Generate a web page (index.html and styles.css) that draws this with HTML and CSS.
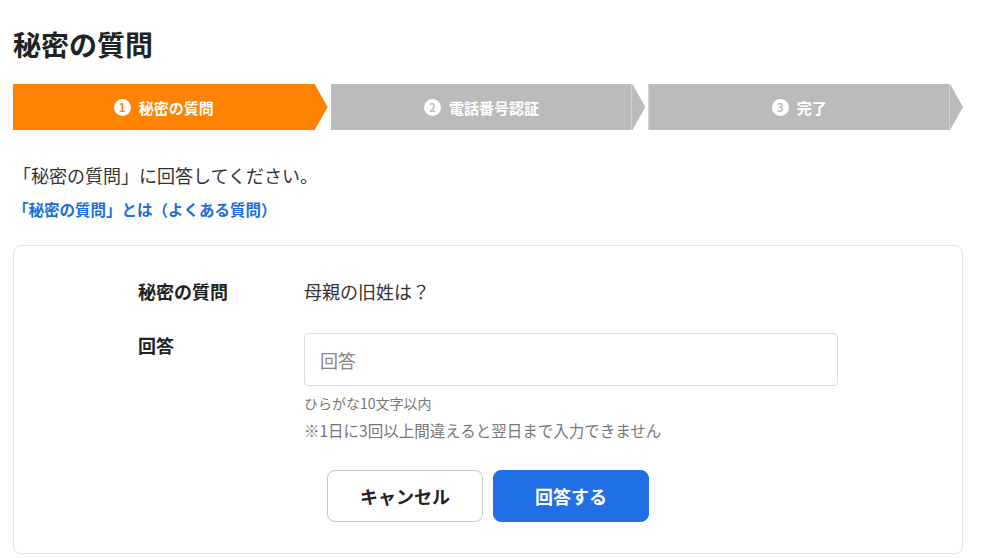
FILE: index.html
```html
<!DOCTYPE html>
<html lang="ja">
<head>
<meta charset="utf-8">
<title>秘密の質問</title>
<link rel="stylesheet" href="styles.css">
</head>
<body>
<div class="page">
  <h1 class="title">秘密の質問</h1>
  <ol class="steps">
    <li class="step step-active"><span class="num">1</span><span class="label">秘密の質問</span></li>
    <li class="step"><span class="num">2</span><span class="label">電話番号認証</span></li>
    <li class="step"><span class="num">3</span><span class="label">完了</span></li>
  </ol>
  <p class="lead">「秘密の質問」に回答してください。</p>
  <a class="faq" href="#">「秘密の質問」とは（よくある質問）</a>
  <div class="card">
    <div class="row">
      <div class="row-label">秘密の質問</div>
      <div class="row-value">母親の旧姓は？</div>
    </div>
    <div class="row row-answer">
      <div class="row-label">回答</div>
      <div class="row-field">
        <input class="input" type="text" placeholder="回答">
        <p class="hint">ひらがな10文字以内</p>
        <p class="note">※1日に3回以上間違えると翌日まで入力できません</p>
      </div>
    </div>
    <div class="actions">
      <button class="btn btn-cancel" type="button">キャンセル</button>
      <button class="btn btn-submit" type="button">回答する</button>
    </div>
  </div>
</div>
</body>
</html>
```

FILE: styles.css
```css
* { box-sizing: border-box; }
html, body { margin: 0; padding: 0; background: #fff; }
body {
  font-family: "Noto Sans CJK JP", "Noto Sans", sans-serif;
  color: #333;
}
.page {
  width: 950px;
  margin-left: 13px;
  padding-top: 24px;
}
.title {
  margin: 0;
  font-size: 28px;
  line-height: 40px;
  font-weight: 700;
  color: #222;
}
.steps {
  list-style: none;
  margin: 20px 0 0;
  padding: 0;
  display: flex;
  gap: 3px;
}
.step {
  flex: 1;
  height: 46px;
  padding-right: 13px;
  display: flex;
  align-items: center;
  justify-content: center;
  gap: 8px;
  color: #fff;
  font-size: 15px;
  font-weight: 700;
  background: linear-gradient(to right, #bbb calc(100% - 14px), #d2d2d2 calc(100% - 14px), #d2d2d2 calc(100% - 13px), #bbb calc(100% - 13px));
  clip-path: polygon(0 0, calc(100% - 13px) 0, 100% 50%, calc(100% - 13px) 100%, 0 100%);
}
.step-active { background: #ff8200; }
.num {
  width: 17px;
  height: 17px;
  border-radius: 50%;
  background: #fff;
  color: #bbb;
  font-size: 11px;
  line-height: 17px;
  text-align: center;
  font-weight: 700;
}
.step-active .num { color: #ff8200; }
.lead {
  margin: 33px 0 0;
  font-size: 18px;
  line-height: 24px;
  color: #333;
}
.faq {
  display: block;
  margin-top: 12px;
  font-size: 15.5px;
  line-height: 20px;
  font-weight: 700;
  color: #1b6fd9;
  text-decoration: none;
}
.card {
  margin-top: 26px;
  border: 1px solid #e3e3e3;
  border-radius: 8px;
  padding: 33px 0 30px 124px;
  height: 309px;
}
.row {
  display: flex;
  font-size: 18px;
  line-height: 24px;
}
.row-label {
  width: 166px;
  font-weight: 700;
  color: #222;
}
.row-value { color: #333; }
.row-answer { margin-top: 30px; }
.row-field { width: 534px; }
.input {
  display: block;
  width: 534px;
  height: 53px;
  border: 1px solid #dcdcdc;
  border-radius: 4px;
  padding: 0 15px;
  font-family: inherit;
  font-size: 18px;
  color: #333;
  outline: none;
}
.input::placeholder { color: #888; }
.hint {
  margin: 7px 0 0;
  font-size: 14px;
  line-height: 20px;
  color: #777;
}
.note {
  margin: 6px 0 0;
  font-size: 15.5px;
  line-height: 22px;
  color: #777;
}
.actions {
  margin: 29px 0 0 -124px;
  display: flex;
  justify-content: center;
  gap: 10px;
}
.btn {
  width: 156px;
  height: 52px;
  border-radius: 8px;
  font-family: inherit;
  font-size: 18px;
  font-weight: 700;
  cursor: pointer;
}
.btn-cancel {
  background: #fff;
  border: 1px solid #c8c8c8;
  color: #222;
}
.btn-submit {
  background: #2170e6;
  border: 1px solid #2170e6;
  color: #fff;
}
```
